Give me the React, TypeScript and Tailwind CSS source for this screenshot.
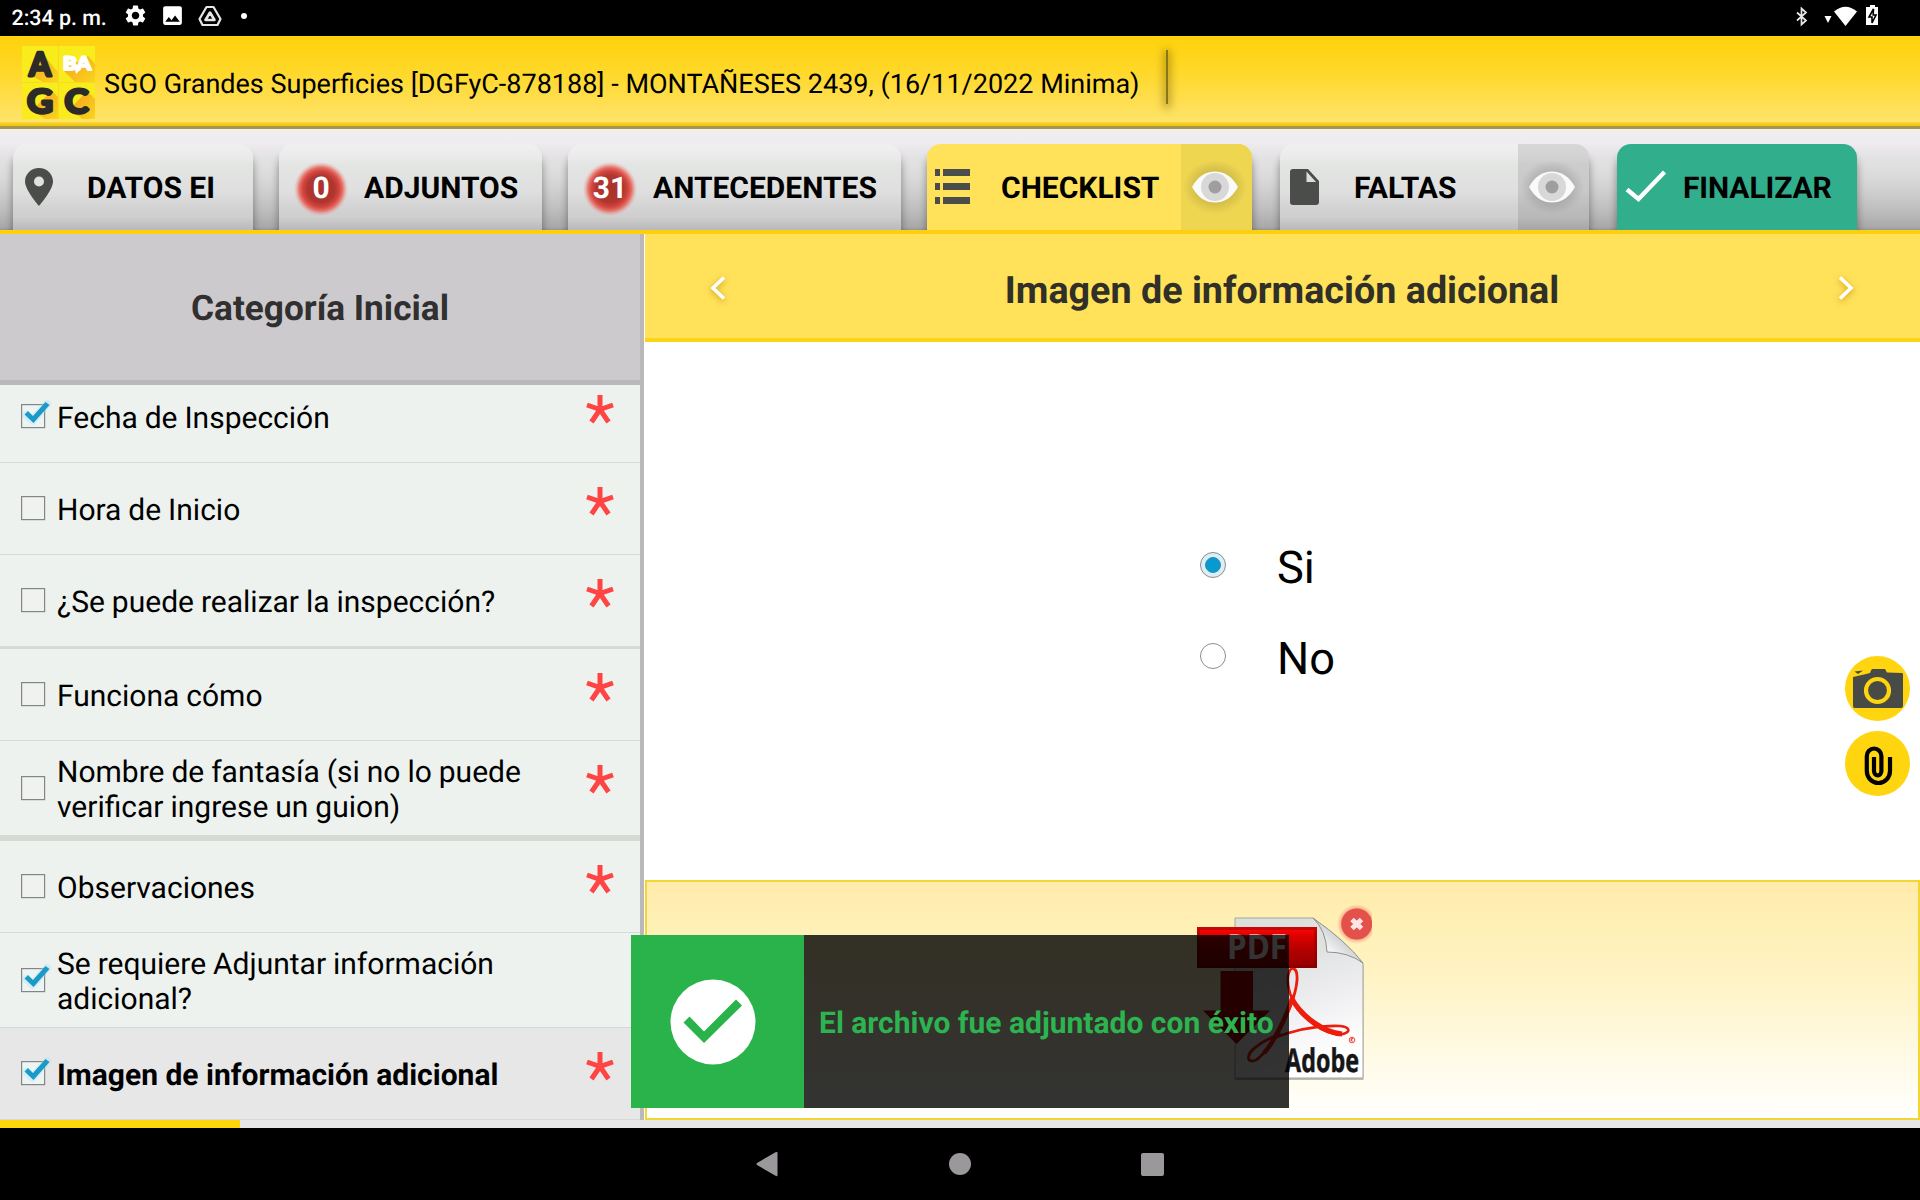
import React from 'react';
import { MdSettings, MdPhoto } from 'react-icons/md';

type Item = { label: string; checked?: boolean; required?: boolean; active?: boolean; row: string };

const ITEMS: Item[] = [
  { label: 'Fecha de Inspección', checked: true, required: true, row: 'h-[92px] border-b' },
  { label: 'Hora de Inicio', required: true, row: 'h-[92px] border-b' },
  { label: '¿Se puede realizar la inspección?', required: true, row: 'h-[94px] border-b-[3px]' },
  { label: 'Funciona cómo', required: true, row: 'h-[92px] border-b' },
  { label: 'Nombre de fantasía (si no lo puede verificar ingrese un guion)', required: true, row: 'h-[100px] border-b-[6px]' },
  { label: 'Observaciones', required: true, row: 'h-[92px] border-b' },
  { label: 'Se requiere Adjuntar información adicional?', checked: true, row: 'h-[95px] border-b' },
  { label: 'Imagen de información adicional', checked: true, required: true, active: true, row: 'h-[92px] border-b' },
];

function StatusBar() {
  return (
    <div className="flex h-9 shrink-0 items-center bg-black text-white">
      <span className="w-[112px] pl-[11.5px] pt-px text-[21.4px] font-medium leading-[34px] whitespace-nowrap">2:34 p. m.</span>
      <div className="flex h-9 items-start pt-[3px] pl-[11px]">
        <MdSettings className="size-[25px]" />
        <MdPhoto className="ml-[12px] size-[25px]" />
        <svg className="ml-[13px] mt-[2px]" width="24" height="22" viewBox="0 0 24 22" fill="none" stroke="#e6e6e6">
          <path d="M8.500 2h7l7 12-3 6H4.500l-3-6z" strokeWidth="2.200" strokeLinejoin="round" />
          <path d="M12 7.500l4.500 7.500h-9z" strokeWidth="2.600" strokeLinejoin="round" />
        </svg>
        <span className="ml-[19px] mt-[10px] size-[6px] rounded-full bg-white" />
      </div>
      <div className="ml-auto flex h-9 items-start pr-[39px] pt-1">
        <svg width="12" height="24" viewBox="0 0 12 24" fill="none" stroke="#e8e8e8" strokeWidth="1.700">
          <path d="M1 8.500L10 16.500L5.500 20.500V4.500L10 8.500L1 16.500" />
        </svg>
        <svg className="ml-[16px]" width="34" height="24" viewBox="0 0 34 24" fill="white">
          <path d="M0.500 12h7l-3.500 7z" />
          <path d="M10 7.500Q21.500 -2 33 7.500L21.500 22z" />
        </svg>
        <svg className="ml-[7px]" width="16" height="24" viewBox="0 0 16 24">
          <path d="M5 1h5v2h3v18H1V3h4z" fill="white" />
          <path d="M8.500 5L4 13h3v6l4-8H8.200z" fill="white" stroke="black" strokeWidth="1.600" />
        </svg>
      </div>
    </div>
  );
}

function Logo() {
  return (
    <svg className="shrink-0" width="74" height="74" viewBox="0 0 74 74">
      <defs>
        <linearGradient id="logoShade" x1="0" y1="0" x2="1" y2="1">
          <stop offset="0.200" stopColor="#f9a81c" />
          <stop offset="1" stopColor="#f9d51e" />
        </linearGradient>
      </defs>
      <rect width="73" height="73" fill="#f8ec1d" />
      <path d="M18 5L36 26V36H21L8 29z" fill="url(#logoShade)" />
      <path d="M66 10L73 18V36H53L41 24z" fill="url(#logoShade)" />
      <path d="M30 45L36 51V73H23L10 64z" fill="url(#logoShade)" />
      <path d="M65 45L73 53V73H61L47 64z" fill="url(#logoShade)" />
      <path d="M36.500 0V73M0 36.500H73" stroke="#f5dc20" strokeWidth="1.200" />
      <g fontFamily="Lato, sans-serif" fontWeight="700" fill="#2b2b28" stroke="#2b2b28" strokeWidth="3" strokeLinejoin="round" strokeLinecap="round">
        <text x="7" y="29.500" fontSize="33" textLength="22" lengthAdjust="spacingAndGlyphs">A</text>
        <text x="5" y="66.500" fontSize="33" textLength="26" lengthAdjust="spacingAndGlyphs">G</text>
        <text x="42.500" y="66.500" fontSize="33" textLength="24" lengthAdjust="spacingAndGlyphs">C</text>
      </g>
      <text x="41" y="24" fontSize="18.500" fontFamily="Lato, sans-serif" fontWeight="900" fill="#fff" stroke="#fff" strokeWidth="2" strokeLinejoin="round" textLength="28" lengthAdjust="spacingAndGlyphs">BA</text>
      <path d="M53 24h5l-4 4z" fill="#fff" />
    </svg>
  );
}

function Header() {
  return (
    <header className="flex h-[93px] shrink-0 items-center border-b-[3px] border-[#a8944a] bg-[linear-gradient(to_bottom,#ffd20a_0%,#ffd829_40%,#ffdf52_75%,#ffe36b_95%,#f6cf1c_97%,#efc50c_100%)] pl-[22px] pt-[4px]">
      <Logo />
      <h1 className="ml-[8px] pt-[2px] text-[27px] leading-[30px] whitespace-nowrap text-black">
        SGO Grandes Superficies [DGFyC-878188] - MONTAÑESES 2439, (16/11/2022 Minima)
      </h1>
      <span className="mb-[12px] ml-[26px] h-[54px] w-[2px] bg-[#8a7519] shadow-[0_2px_8px_2px_rgba(90,70,0,0.5)]" />
    </header>
  );
}

function Eye() {
  return (
    <svg width="66" height="56" viewBox="0 0 66 56" className="overflow-visible">
      <defs>
        <radialGradient id="eyeGlow">
          <stop offset="0.500" stopColor="#000" stopOpacity="0.140" />
          <stop offset="1" stopColor="#000" stopOpacity="0" />
        </radialGradient>
      </defs>
      <ellipse cx="33" cy="28" rx="32" ry="27" fill="url(#eyeGlow)" />
      <path d="M10 28C16 17 24 12.500 33 12.500S50 17 56 28C50 39 42 43.500 33 43.500S16 39 10 28z" fill="#fafafa" />
      <circle cx="33" cy="28" r="14" fill="#d8d8d8" />
      <circle cx="33" cy="28" r="6.500" fill="#9f9d9f" />
    </svg>
  );
}

function Badge({ n }: { n: string }) {
  return (
    <span className="flex size-[54px] shrink-0 items-center justify-center rounded-full bg-[radial-gradient(closest-side,#a9332c_0%,#ae362f_50%,#d2463f_68%,rgba(232,92,82,0.85)_80%,rgba(238,120,110,0.35)_91%,rgba(240,120,110,0)_100%)] text-[30px] font-bold leading-none text-white">
      {n}
    </span>
  );
}

const TAB = 'flex h-[86px] shrink-0 items-center overflow-hidden rounded-t-[14px] text-[30px] font-bold leading-none text-black whitespace-nowrap';
const GREY = 'bg-[linear-gradient(to_bottom,#f1f0f1_0%,#ecebec_14%,#e3e5e3_24%,#dedfde_55%,#d5d4d5_72%,#cfcecf_85%,#b9b9b9_100%)] shadow-[0_10px_9px_rgba(0,0,0,0.4)]';

function Tabs() {
  return (
    <nav className="flex h-[105px] shrink-0 items-end overflow-hidden border-b-4 border-[#fdd00f] bg-[linear-gradient(to_bottom,#efefef_0%,#efebef_14%,#e3e3e4_28%,#dcdcdc_45%,#cfcfcf_62%,#bebebf_80%,#a9a9aa_97%,#989898_100%)] pl-[13px]">
      <div className={`${TAB} ${GREY} w-[240px]`}>
        <svg className="ml-[12px]" width="28" height="38" viewBox="0 0 28 38">
          <path fillRule="evenodd" d="M14 0C6 0 0 6 0 13.500C0 22 14 38 14 38S28 22 28 13.500C28 6 22 0 14 0zM14 18.500a5 5 0 1 1 0-10a5 5 0 0 1 0 10z" fill="#4b4d4a" />
        </svg>
        <span className="ml-[34px] pt-[4px]">DATOS EI</span>
      </div>
      <div className={`${TAB} ${GREY} ml-[26px] w-[263px]`}>
        <span className="ml-[15px] mt-[4px]"><Badge n="0" /></span>
        <span className="ml-[16px] pt-[4px]">ADJUNTOS</span>
      </div>
      <div className={`${TAB} ${GREY} ml-[26px] w-[333px]`}>
        <span className="ml-[15px] mt-[4px]"><Badge n="31" /></span>
        <span className="ml-[16px] pt-[4px]">ANTECEDENTES</span>
      </div>
      <div className={`${TAB} ml-[26px] w-[325px] bg-[#ffe25a] shadow-[0_10px_9px_rgba(0,0,0,0.4)]`}>
        <svg className="ml-[8px]" width="36" height="36" viewBox="0 0 36 36" fill="#4b4d4a">
          <path d="M0 0h5v7H0zM8 0h27v7H8zM0 14h5v7H0zM8 14h27v7H8zM0 28h5v7H0zM8 28h27v7H8z" />
        </svg>
        <span className="ml-[30px] pt-[4px]">CHECKLIST</span>
        <span className="ml-auto flex h-full w-[71px] items-center justify-center bg-[#eed651] pr-1"><Eye /></span>
      </div>
      <div className={`${TAB} ${GREY} ml-[28px] w-[309px]`}>
        <svg className="ml-[9px]" width="31" height="38" viewBox="0 0 31 38">
          <path d="M4 1h15l11 12v21q0 3-3 3H4q-3 0-3-3V4q0-3 3-3z" fill="#4b4d4a" />
          <path d="M17.500 3.500V14H27z" fill="#dedede" />
        </svg>
        <span className="ml-[34px] pt-[4px]">FALTAS</span>
        <span className="ml-auto flex h-full w-[71px] items-center justify-center bg-black/10 pr-1"><Eye /></span>
      </div>
      <div className={`${TAB} ml-[28px] w-[240px] bg-[#31ae8c] shadow-[0_10px_9px_rgba(0,0,0,0.4)]`}>
        <svg className="ml-[8px]" width="42" height="36" viewBox="0 0 42 36">
          <path d="M2 20.500L13.500 30L39.500 3" fill="none" stroke="white" strokeWidth="4.400" />
        </svg>
        <span className="ml-[16px] pt-[4px] tracking-[-0.1px]">FINALIZAR</span>
      </div>
    </nav>
  );
}

function Checkbox({ checked }: { checked?: boolean }) {
  return (
    <svg className="mb-px shrink-0 overflow-visible" width="24" height="24" viewBox="0 0 24 24">
      <rect x="0.600" y="0.600" width="23" height="23" fill={checked ? '#edf4f4' : '#f0f2ef'} stroke="#858585" strokeWidth="1.200" />
      {checked && (
        <>
          <path d="M5 11L11.500 16.500L26 0" fill="none" stroke="#a9e0f2" strokeOpacity="0.350" strokeWidth="8" strokeLinecap="round" strokeLinejoin="round" />
          <path d="M3.500 10.500L7 7L12 12L24.500 -2L28.500 1L12.500 19z" fill="#1b9ac8" />
        </>
      )}
    </svg>
  );
}

function Star() {
  return (
    <svg className="absolute right-[26.500px] top-[22.500px]" width="28" height="30" viewBox="0 0 28 30">
      <path d="M14 1V15M1 11L14 15.500M27 11L14 15.500M5.500 28L14 15.500L22.500 28" fill="none" stroke="#ff4444" strokeWidth="5" />
    </svg>
  );
}

function Sidebar() {
  return (
    <aside className="flex w-[644px] shrink-0 flex-col border-r-4 border-[#bbb8bc] bg-[#eef2ee]">
      <h2 className="flex h-[151px] shrink-0 items-center justify-center border-b-[5px] border-[#bbb8bc] bg-[#cdcace] pt-[3px] text-[35.200px] font-bold text-[#303030]">
        Categoría Inicial
      </h2>
      <ul className="-mt-[14px] flex flex-col [clip-path:inset(14px_0_0_0)]">
        {ITEMS.map((it) => (
          <li
            key={it.label}
            className={`relative flex shrink-0 items-center border-[#d5dad5] pl-[21px] ${it.row} ${it.active ? 'bg-[#e7e7e7]' : 'bg-[#eef2ee]'}`}
          >
            <Checkbox checked={it.checked} />
            <span className={`ml-[12px] w-[500px] pt-[4px] text-[30px] leading-[35px] text-black ${it.active ? 'font-bold' : '[word-spacing:-0.5px]'}`}>{it.label}</span>
            {it.required && <Star />}
          </li>
        ))}
      </ul>
    </aside>
  );
}

function Chevron({ flip }: { flip?: boolean }) {
  return (
    <svg className={`mt-[4px] overflow-visible drop-shadow-[0_2px_3px_rgba(190,140,0,0.8)] ${flip ? '-scale-x-100' : ''}`} width="16" height="24" viewBox="0 0 16 24">
      <path d="M14 1.500L3 12L14 22.500" fill="none" stroke="white" strokeWidth="3.600" />
    </svg>
  );
}

function Radio({ label, on }: { label: string; on?: boolean }) {
  return (
    <label className="flex h-[91px] items-center">
      <span className={`flex size-[26px] items-center justify-center rounded-full border-[1.500px] border-[#8c8c8c] ${on ? 'bg-[#d9f0f8]' : 'bg-white'}`}>
        {on && <span className="size-4 rounded-full border border-[#3f87a8] bg-[#069bd0]" />}
      </span>
      <span className="ml-[51px] pt-[8px] text-[45.200px] leading-[50px] text-black">{label}</span>
    </label>
  );
}

function PdfFile() {
  return (
    <svg className="mb-[4px] mr-[2px]" width="180" height="190" viewBox="1192 903 180 190">
      <defs>
        <linearGradient id="page" x1="0" y1="0" x2="0.300" y2="1">
          <stop offset="0" stopColor="#dbe0db" />
          <stop offset="0.350" stopColor="#e0e2e0" />
          <stop offset="0.600" stopColor="#ececef" />
          <stop offset="1" stopColor="#ffffff" />
        </linearGradient>
        <linearGradient id="banner" x1="0" y1="0" x2="0" y2="1">
          <stop offset="0" stopColor="#ff0a0a" />
          <stop offset="0.200" stopColor="#e00000" />
          <stop offset="0.600" stopColor="#b00000" />
          <stop offset="1" stopColor="#960000" />
        </linearGradient>
        <linearGradient id="fold" x1="0" y1="1" x2="0.700" y2="0.300">
          <stop offset="0" stopColor="#ffffff" />
          <stop offset="0.450" stopColor="#f3f3f5" />
          <stop offset="1" stopColor="#b9bcbe" />
        </linearGradient>
        <radialGradient id="closeGlow">
          <stop offset="0.700" stopColor="#e8504a" stopOpacity="0.600" />
          <stop offset="1" stopColor="#f08070" stopOpacity="0" />
        </radialGradient>
      </defs>
      <path d="M1235 920H1312L1363.500 966V1080H1235z" fill="#8f8f86" opacity="0.600" />
      <path d="M1235 918H1313L1363 963V1078H1235z" fill="url(#page)" stroke="#a3a59f" strokeWidth="1" />
      <path d="M1313 918Q1326 930 1327 952Q1348 952 1363 963Q1346 941 1313 918z" fill="url(#fold)" stroke="#858585" strokeWidth="0.900" />
      <g fill="none" stroke="#ee1c0c">
        <path d="M1292 968C1286 973 1287 986 1292 999C1300 1018 1325 1036 1343 1034C1351 1032 1350 1027 1340 1026C1315 1025 1289 1032 1271 1039" strokeWidth="2.600" />
        <path d="M1292 999C1302 1017 1325 1033 1342 1034" strokeWidth="5" />
        <path d="M1292 968C1300 969 1298 987 1290 1007C1282 1027 1266 1054 1256 1060C1247 1064 1245 1055 1256 1047C1263 1041 1272 1037 1281 1034" strokeWidth="2.800" />
        <path d="M1293 995C1288 1014 1274 1042 1264 1053" strokeWidth="4.600" />
        <circle cx="1352" cy="1040" r="2.800" strokeWidth="0.800" />
        <path d="M1351 1041.500v-3h2l-2 1.500l2 1.500" strokeWidth="0.700" />
      </g>
      <path d="M1220.500 971H1253V1010.500H1270L1236.500 1044L1203 1010.500H1220.500z" fill="#b40000" />
      <rect x="1197" y="927" width="120" height="41" fill="url(#banner)" />
      <path d="M1198.500 966.500V928.500H1315.500V966.500z" fill="none" stroke="#700000" strokeOpacity="0.350" strokeWidth="3" />
      <text x="1227" y="958.500" fontFamily="'Open Sans', sans-serif" fontWeight="700" fontSize="34.500" fill="#fff" textLength="60" lengthAdjust="spacingAndGlyphs">PDF</text>
      <text x="1285" y="1071.700" fontFamily="'Open Sans', sans-serif" fontWeight="700" fontSize="32.500" fill="#161616" stroke="#161616" strokeWidth="0.500" textLength="74" lengthAdjust="spacingAndGlyphs">Adobe</text>
      <circle cx="1356.700" cy="924" r="20" fill="url(#closeGlow)" />
      <circle cx="1356.700" cy="924" r="15.500" fill="#e4514b" />
      <path d="M1352 919.500l9.500 9M1361.500 919.500l-9.500 9" stroke="#ffe5e3" strokeWidth="5" />
    </svg>
  );
}

function Main() {
  return (
    <main className="ml-px flex min-w-0 flex-1 flex-col bg-white">
      <div className="flex h-[108px] shrink-0 items-center justify-between border-b-4 border-[#fdd314] bg-[#ffe25a] pl-[65px] pr-[66px]">
        <Chevron />
        <h2 className="pt-[10px] text-[37.700px] font-bold leading-[44px] text-[#303028]">Imagen de información adicional</h2>
        <Chevron flip />
      </div>
      <div className="flex h-[538px] shrink-0 pl-[555px]">
        <div className="flex flex-col pt-[177px]">
          <Radio label="Si" on />
          <Radio label="No" />
        </div>
        <div className="ml-auto flex flex-col gap-[10px] pr-[10px] pt-[314px]">
          <button className="flex size-[65px] items-center justify-center rounded-full bg-[#ffd50f]">
            <svg width="52" height="42" viewBox="0 0 52 42">
              <path d="M1 9L12 6.500L18 5L19 2.500L20 1H33L35 4.500L50 5Q51 5 51 6.500V38Q51 40 49 40H2.500Q1 40 1 38z" fill="#484a45" />
              <path d="M2.500 3.500L11 2.500L6 6z" fill="#484a45" />
              <circle cx="25.500" cy="22.500" r="11.500" fill="#484a45" stroke="#ffd50f" strokeWidth="4.200" />
            </svg>
          </button>
          <button className="flex size-[65px] items-center justify-center rounded-full bg-[#ffd50f]">
            <svg width="65" height="65" viewBox="0 0 65 65" fill="none" stroke="black" strokeWidth="4.200">
              <path d="M45 26V40A11.600 12 0 0 1 21.800 40V25A7.300 7.500 0 0 1 36.400 25V40A3.700 4.500 0 0 1 29 40V26" />
            </svg>
          </button>
        </div>
      </div>
      <section className="flex h-[240px] shrink-0 items-center justify-center border-2 border-[#f3d631] bg-[linear-gradient(to_bottom,#ffebab_0%,#fff0b5_18%,#fff3c4_40%,#fff8dc_65%,#fffdf3_88%,#ffffff_100%)]">
        <PdfFile />
      </section>
    </main>
  );
}

function Toast() {
  return (
    <div className="absolute left-[631px] top-[935px] flex h-[173px] w-[658px] bg-black/80">
      <div className="flex w-[173px] shrink-0 items-center justify-center bg-[#2ab24b] pr-[9px]">
        <svg width="86" height="86" viewBox="0 0 86 86">
          <circle cx="43" cy="43" r="42.500" fill="white" />
          <path d="M13.500 43.500L19.500 37.500L34 52.500L66 20.500L72 26.500L34 64z" fill="#2ab24b" />
        </svg>
      </div>
      <p className="self-center pl-[15px] pt-[4px] text-[30px] font-bold leading-[35px] whitespace-nowrap text-[#2db350]">
        El archivo fue adjuntado con éxito
      </p>
    </div>
  );
}

export default function App() {
  return (
    <div className="relative flex h-[1200px] w-[1920px] flex-col overflow-hidden bg-white font-[Roboto,sans-serif] [text-rendering:geometricPrecision]">
      <StatusBar />
      <Header />
      <Tabs />
      <div className="flex h-[886px] shrink-0">
        <Sidebar />
        <Main />
      </div>
      <div className="h-2 shrink-0 bg-[#e7e7e7]">
        <div className="h-full w-[240px] bg-[#ffd60a]" />
      </div>
      <div className="flex flex-1 items-center justify-center gap-[170px] bg-black">
        <svg width="22" height="26" viewBox="0 0 22 26" fill="#9b989b">
          <path d="M20 1q1.500-.5 1.500 1v22q0 1.500-1.500 1L1 14q-1-1 0-2z" />
        </svg>
        <span className="ml-px size-[22px] rounded-full bg-[#9b989b]" />
        <span className="size-[23px] rounded-[2px] bg-[#9b989b]" />
      </div>
      <Toast />
    </div>
  );
}
